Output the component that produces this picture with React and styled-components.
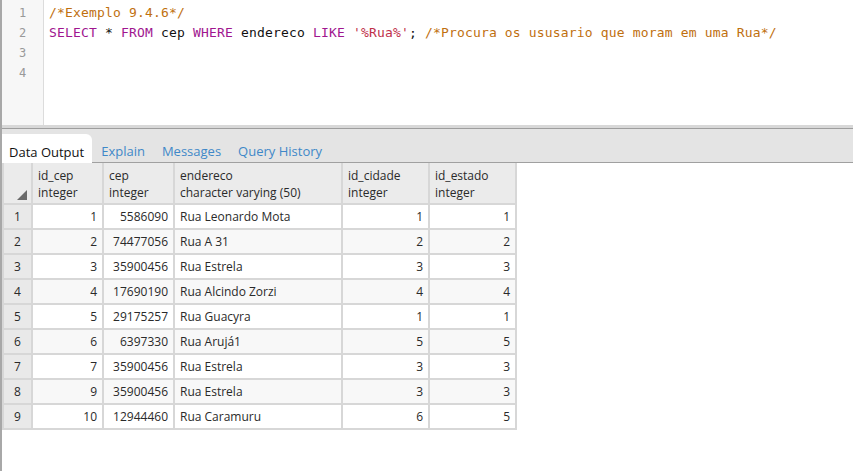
import React from 'react'
import styled, { createGlobalStyle } from 'styled-components'

const Global = createGlobalStyle`
    html, body {
        margin: 0;
        padding: 0;
        background: #fff;
    }
`

const Frame = styled.div`
    height: 471px;
    display: flex;
    flex-direction: column;
    border-left: 2px solid #a8a8a8;
    box-sizing: border-box;
    overflow: hidden;
`

const Editor = styled.div`
    height: 125px;
    display: flex;
    background: #fff;
`

const Gutter = styled.div`
    width: 42px;
    background: #f7f7f7;
    border-right: 1px solid #dcdcdc;
    padding-top: 3px;
    box-sizing: border-box;
`

const LineNo = styled.div`
    height: 20px;
    line-height: 20px;
    text-align: center;
    font-family: "DejaVu Sans Mono", monospace;
    font-size: 12px;
    color: #999;
`

const Code = styled.div`
    flex: 1;
    padding: 3px 0 0 5px;
`

const CodeLine = styled.div`
    height: 20px;
    line-height: 20px;
    font-family: "DejaVu Sans Mono", monospace;
    font-size: 13px;
    letter-spacing: 0.17px;
    white-space: pre;
    color: #111;
`

const Tok = styled.span`
    color: ${p => p.$c};
`

const Splitter = styled.div`
    height: 3px;
    background: #d8d8d8;
`

const TabBar = styled.div`
    height: 35px;
    display: flex;
    align-items: flex-end;
    background: #e4e4e4;
    border-top: 1px solid #9e9e9e;
    border-bottom: 1px solid #a0a0a0;
    box-sizing: border-box;
`

const Tab = styled.div`
    height: 29px;
    padding: ${p => (p.$active ? '6px 8px 0 7px' : '6px 8px 0 9px')};
    display: flex;
    align-items: center;
    font-family: "Open Sans", sans-serif;
    font-size: 13px;
    color: ${p => (p.$active ? '#111' : '#3f88c8')};
    background: ${p => (p.$active ? '#fff' : 'transparent')};
    border-top-right-radius: ${p => (p.$active ? '6px' : '0')};
    margin-bottom: ${p => (p.$active ? '-1px' : '0')};
    box-sizing: border-box;
`

const Output = styled.div`
    flex: 1;
    background: #fff;
`

const Grid = styled.table`
    border-collapse: collapse;
    table-layout: fixed;
    width: 513px;
    font-family: "Open Sans", sans-serif;
    font-size: 12px;
    color: #2a2a2a;
`

const Head = styled.th`
    height: 38px;
    background: #ebebeb;
    border: 2px solid #d7d7d7;
    border-top: none;
    text-align: left;
    font-weight: 400;
    line-height: 17px;
    padding: 2px 5px 0;
    vertical-align: middle;
    position: relative;
`

const Corner = styled.svg`
    position: absolute;
    right: 4px;
    bottom: 3px;
`

const Cell = styled.td`
    height: 23px;
    border: 2px solid #d7d7d7;
    padding: 0 5px;
    text-align: ${p => (p.$right ? 'right' : 'left')};
    white-space: nowrap;
    overflow: hidden;
`

const RowNo = styled.td`
    height: 23px;
    border: 2px solid #d7d7d7;
    background: #e9e9e9;
    text-align: center;
    padding: 0;
`

const Row = styled.tr`
    background: ${p => (p.$alt ? '#f8f8f8' : '#fff')};
`

const columns = [
    ['id_cep', 'integer'],
    ['cep', 'integer'],
    ['endereco', 'character varying (50)'],
    ['id_cidade', 'integer'],
    ['id_estado', 'integer'],
]

const widths = [29, 71, 71, 168, 87, 87]

const rows = [
    [1, 5586090, 'Rua Leonardo Mota', 1, 1],
    [2, 74477056, 'Rua A 31', 2, 2],
    [3, 35900456, 'Rua Estrela', 3, 3],
    [4, 17690190, 'Rua Alcindo Zorzi', 4, 4],
    [5, 29175257, 'Rua Guacyra', 1, 1],
    [6, 6397330, 'Rua Arujá1', 5, 5],
    [7, 35900456, 'Rua Estrela', 3, 3],
    [9, 35900456, 'Rua Estrela', 3, 3],
    [10, 12944460, 'Rua Caramuru', 6, 5],
]

const KW = '#a0168f'
const CM = '#c0700f'
const STR = '#c0304a'

const App = () => {
    return (
        <Frame>
            <Global />
            <Editor>
                <Gutter>
                    {[1, 2, 3, 4].map(n => <LineNo key={n}>{n}</LineNo>)}
                </Gutter>
                <Code>
                    <CodeLine><Tok $c={CM}>/*Exemplo 9.4.6*/</Tok></CodeLine>
                    <CodeLine>
                        <Tok $c={KW}>SELECT</Tok> * <Tok $c={KW}>FROM</Tok> cep <Tok $c={KW}>WHERE</Tok> endereco <Tok $c={KW}>LIKE</Tok> <Tok $c={STR}>'%Rua%'</Tok>; <Tok $c={CM}>/*Procura os ususario que moram em uma Rua*/</Tok>
                    </CodeLine>
                    <CodeLine />
                    <CodeLine />
                </Code>
            </Editor>
            <Splitter />
            <TabBar>
                <Tab $active>Data Output</Tab>
                <Tab>Explain</Tab>
                <Tab>Messages</Tab>
                <Tab>Query History</Tab>
            </TabBar>
            <Output>
                <Grid>
                    <colgroup>
                        {widths.map((w, i) => <col key={i} style={{ width: w }} />)}
                    </colgroup>
                    <thead>
                        <tr>
                            <Head>
                                <Corner width="10" height="10" viewBox="0 0 10 10">
                                    <polygon points="0,10 10,10 10,0" fill="#6a6a6a" />
                                </Corner>
                            </Head>
                            {columns.map(([name, type]) => (
                                <Head key={name}>{name}<br />{type}</Head>
                            ))}
                        </tr>
                    </thead>
                    <tbody>
                        {rows.map((r, i) => (
                            <Row key={i} $alt={i % 2 === 1}>
                                <RowNo>{i + 1}</RowNo>
                                <Cell $right>{r[0]}</Cell>
                                <Cell $right>{r[1]}</Cell>
                                <Cell>{r[2]}</Cell>
                                <Cell $right>{r[3]}</Cell>
                                <Cell $right>{r[4]}</Cell>
                            </Row>
                        ))}
                    </tbody>
                </Grid>
            </Output>
        </Frame>
    )
}

export default App
